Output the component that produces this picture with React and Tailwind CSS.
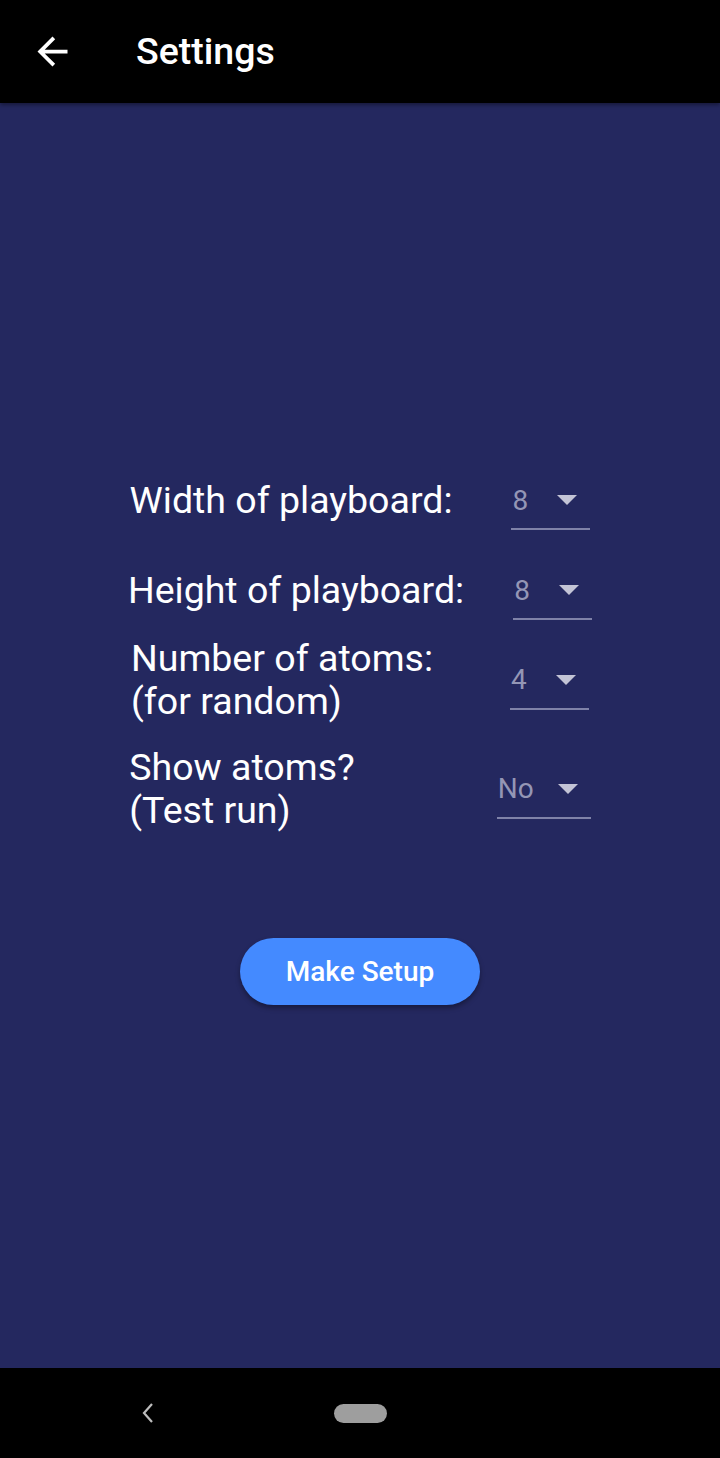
import React from "react";

function Dropdown({ value, width, textPl }) {
  return (
    <div
      className="h-[59px] flex items-center justify-between border-b-2 border-[#7f82a8] pr-[13px] pt-[2px]"
      style={{ width }}
    >
      <span
        className="text-[28px] text-[#9496b5] leading-none"
        style={{ paddingLeft: textPl }}
      >
        {value}
      </span>
      <svg width="20" height="10" viewBox="0 0 20 10" className="mb-[1px]">
        <path d="M0 0 L20 0 L10 10 Z" fill="#c3c4d6" />
      </svg>
    </div>
  );
}

function Row({ label, gap, value, width, textPl, className }) {
  return (
    <div className={"flex items-center justify-center " + className} style={{ gap }}>
      <div className="text-[37.5px] leading-[43px] text-white">{label}</div>
      <Dropdown value={value} width={width} textPl={textPl} />
    </div>
  );
}

export default function App() {
  return (
    <div
      className="w-[720px] h-[1458px] flex flex-col bg-[#24285f]"
      style={{ fontFamily: "Roboto, 'Noto Sans', sans-serif" }}
    >
      <header className="h-[103px] bg-black flex items-center shrink-0 shadow-[0_2px_4px_rgba(0,0,0,0.4)] relative z-10">
        <svg width="45" height="45" viewBox="0 0 24 24" className="ml-[30px]">
          <path d="M20 11H7.83l5.59-5.59L12 4l-8 8 8 8 1.41-1.41L7.83 13H20v-2z" fill="#fff" />
        </svg>
        <h1 className="ml-[61px] text-[37.5px] font-medium text-white mb-[1px]">Settings</h1>
      </header>
      <main className="flex-1 flex flex-col items-center pt-[368px]">
        <Row label="Width of playboard:" gap="59px" value="8" width="79px" textPl="1px" className="" />
        <Row label="Height of playboard:" gap="49px" value="8" width="79px" textPl="1px" className="mt-[31px]" />
        <Row
          label={<>Number of atoms:<br />(for random)</>}
          gap="77px"
          value="4"
          width="79px"
          textPl="1px"
          className="mt-[17px]"
        />
        <Row
          label={<>Show atoms?<br />(Test run)</>}
          gap="142px"
          value="No"
          width="94px"
          textPl="1px"
          className="mt-[23px]"
        />
        <button className="mt-[106px] w-[240px] h-[67px] rounded-full bg-[#448aff] text-white text-[28px] font-medium shadow-[0_3px_5px_rgba(0,0,0,0.35)]">
          Make Setup
        </button>
      </main>
      <footer className="h-[90px] bg-black shrink-0 flex items-center">
        <svg width="14" height="22" viewBox="0 0 14 22" className="ml-[141px]">
          <path d="M11 2 L3 11 L11 20" stroke="#bdbdbd" strokeWidth="2.2" fill="none" />
        </svg>
        <div className="ml-[179px] w-[53px] h-[19px] rounded-full bg-[#9e9e9e]" />
      </footer>
    </div>
  );
}
